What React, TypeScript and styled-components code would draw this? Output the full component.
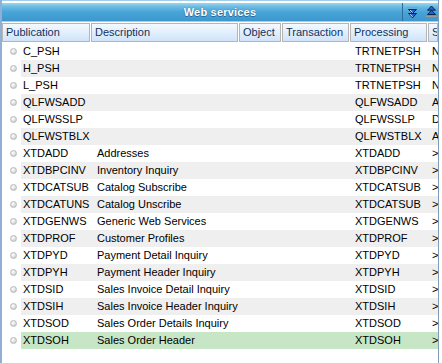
import React from "react";
import styled, { createGlobalStyle } from "styled-components";

const Global = createGlobalStyle`
  html, body { margin: 0; padding: 0; background: #fff; }
  body { font-family: "Liberation Sans", Arial, sans-serif; }
`;

const Frame = styled.div`
  width: 436px;
  height: 363px;
  border-left: 2px solid #8fb0d4;
  border-right: 1px solid #7f9db9;
  overflow: hidden;
  display: flex;
  flex-direction: column;
  box-sizing: content-box;
`;

const TopRule = styled.div`
  height: 1px;
  background: #9fcfec;
  border-bottom: 2px solid #fff;
`;

const TitleBar = styled.div`
  height: 18px;
  display: flex;
  background: linear-gradient(to bottom, #9ad6f0 0%, #6ab9e2 22%, #48a5d8 50%, #3d97cd 100%);
`;

const Title = styled.div`
  flex: 1;
  display: flex;
  align-items: center;
  justify-content: center;
  padding-left: 36px;
  color: #fff;
  font-family: "Liberation Sans", Arial, sans-serif;
  font-weight: bold;
  font-size: 11px;
  letter-spacing: 0.2px;
  text-shadow: 0 0 1px #1d5d8c, 0 1px 0 #2a6e9e;
`;

const ToolArea = styled.div`
  width: 36px;
  border-left: 1px solid #2e6c98;
  display: flex;
  align-items: center;
  gap: 8px;
  padding-left: 4px;
  box-sizing: border-box;
`;

const MidRule = styled.div`
  height: 1px;
  background: #9fcfec;
  border-bottom: 1px solid #fff;
`;

const HeaderRow = styled.div`
  display: flex;
  gap: 1px;
  height: 19px;
`;

const HeadCell = styled.div<{ $w?: number }>`
  ${(p) => (p.$w ? `width: ${p.$w}px; flex: none;` : "flex: 1;")}
  box-sizing: border-box;
  border: 1px solid #b6b6b6;
  background: linear-gradient(to bottom, #f4f9ff 0%, #e2effd 50%, #cfe3f8 100%);
  color: #10325e;
  font-size: 11px;
  line-height: 17px;
  padding-left: 3px;
  white-space: nowrap;
  overflow: hidden;
`;

const Body = styled.div`
  display: flex;
  flex-direction: column;
  padding-top: 1px;
`;

const Row = styled.div`
  display: flex;
  height: 17px;
  align-items: stretch;
`;

const Bullet = styled.div`
  width: 19px;
  flex: none;
  display: flex;
  align-items: center;
  padding-left: 8px;
  box-sizing: border-box;
  &::before {
    content: "";
    width: 7px;
    height: 7px;
    border-radius: 50%;
    box-sizing: border-box;
    border: 1px solid #b9b9b9;
    background: radial-gradient(circle at 40% 35%, #ffffff 0%, #e4e4e4 45%, #bcbcbc 100%);
  }
`;

const Cells = styled.div<{ $tone: "plain" | "alt" | "sel" }>`
  flex: 1;
  display: flex;
  background: ${(p) =>
    p.$tone === "sel" ? "#c6e6c6" : p.$tone === "alt" ? "#efefef" : "#ffffff"};
`;

const Cell = styled.div<{ $w?: number; $pad?: number }>`
  ${(p) => (p.$w ? `width: ${p.$w}px; flex: none;` : "flex: 1;")}
  padding-left: ${(p) => p.$pad ?? 6}px;
  box-sizing: border-box;
  font-size: 11px;
  line-height: 17px;
  color: #000;
  white-space: nowrap;
  overflow: hidden;
`;

const DownIcon = () => (
  <svg width="11" height="14" viewBox="0 0 11 14">
    <line x1="0" y1="2.5" x2="11" y2="2.5" stroke="#9a9a9a" strokeWidth="1" />
    <path d="M1.5 4.5 L9.5 4.5 L5.5 8.5 Z" fill="#1e63d8" stroke="#0a1a3a" strokeWidth="0.9" />
    <path d="M1.5 8.5 L9.5 8.5 L5.5 12.8 Z" fill="#1e63d8" stroke="#0a1a3a" strokeWidth="0.9" />
    <path d="M3 5.2 L5.5 7.6" stroke="#fff" strokeWidth="0.9" />
    <path d="M3 9.2 L5.5 11.8" stroke="#fff" strokeWidth="0.9" />
  </svg>
);

const UpIcon = () => (
  <svg width="11" height="14" viewBox="0 0 11 14">
    <path d="M5.5 1 L9.5 5.2 L1.5 5.2 Z" fill="#1e63d8" stroke="#0a1a3a" strokeWidth="0.9" />
    <path d="M5.5 5.2 L9.5 9.5 L1.5 9.5 Z" fill="#1e63d8" stroke="#0a1a3a" strokeWidth="0.9" />
    <line x1="0" y1="11.5" x2="11" y2="11.5" stroke="#9a9a9a" strokeWidth="1" />
  </svg>
);

type Item = { pub: string; desc: string; proc: string; s: string };

const items: Item[] = [
  { pub: "C_PSH", desc: "", proc: "TRTNETPSH", s: "N" },
  { pub: "H_PSH", desc: "", proc: "TRTNETPSH", s: "N" },
  { pub: "L_PSH", desc: "", proc: "TRTNETPSH", s: "N" },
  { pub: "QLFWSADD", desc: "", proc: "QLFWSADD", s: "A" },
  { pub: "QLFWSSLP", desc: "", proc: "QLFWSSLP", s: "D" },
  { pub: "QLFWSTBLX", desc: "", proc: "QLFWSTBLX", s: "A" },
  { pub: "XTDADD", desc: "Addresses", proc: "XTDADD", s: ">" },
  { pub: "XTDBPCINV", desc: "Inventory Inquiry", proc: "XTDBPCINV", s: ">" },
  { pub: "XTDCATSUB", desc: "Catalog Subscribe", proc: "XTDCATSUB", s: ">" },
  { pub: "XTDCATUNS", desc: "Catalog Unscribe", proc: "XTDCATSUB", s: ">" },
  { pub: "XTDGENWS", desc: "Generic Web Services", proc: "XTDGENWS", s: ">" },
  { pub: "XTDPROF", desc: "Customer Profiles", proc: "XTDPROF", s: ">" },
  { pub: "XTDPYD", desc: "Payment Detail Inquiry", proc: "XTDPYD", s: ">" },
  { pub: "XTDPYH", desc: "Payment Header Inquiry", proc: "XTDPYH", s: ">" },
  { pub: "XTDSID", desc: "Sales Invoice Detail Inquiry", proc: "XTDSID", s: ">" },
  { pub: "XTDSIH", desc: "Sales Invoice Header Inquiry", proc: "XTDSIH", s: ">" },
  { pub: "XTDSOD", desc: "Sales Order Details Inquiry", proc: "XTDSOD", s: ">" },
  { pub: "XTDSOH", desc: "Sales Order Header", proc: "XTDSOH", s: ">" },
];

export default function App() {
  return (
    <>
      <Global />
      <Frame>
        <TopRule />
        <TitleBar>
          <Title>Web services</Title>
          <ToolArea>
            <DownIcon />
            <UpIcon />
          </ToolArea>
        </TitleBar>
        <MidRule />
        <HeaderRow>
          <HeadCell $w={88}>Publication</HeadCell>
          <HeadCell $w={147}>Description</HeadCell>
          <HeadCell $w={42}>Object</HeadCell>
          <HeadCell $w={67}>Transaction</HeadCell>
          <HeadCell $w={77}>Processing</HeadCell>
          <HeadCell>S</HeadCell>
        </HeaderRow>
        <Body>
          {items.map((it, i) => (
            <Row key={it.pub}>
              <Bullet />
              <Cells $tone={i === items.length - 1 ? "sel" : i % 2 ? "alt" : "plain"}>
                <Cell $w={70} $pad={2}>{it.pub}</Cell>
                <Cell $w={148}>{it.desc}</Cell>
                <Cell $w={43} />
                <Cell $w={68} />
                <Cell $w={78} $pad={5}>{it.proc}</Cell>
                <Cell $pad={4}>{it.s}</Cell>
              </Cells>
            </Row>
          ))}
        </Body>
      </Frame>
    </>
  );
}
